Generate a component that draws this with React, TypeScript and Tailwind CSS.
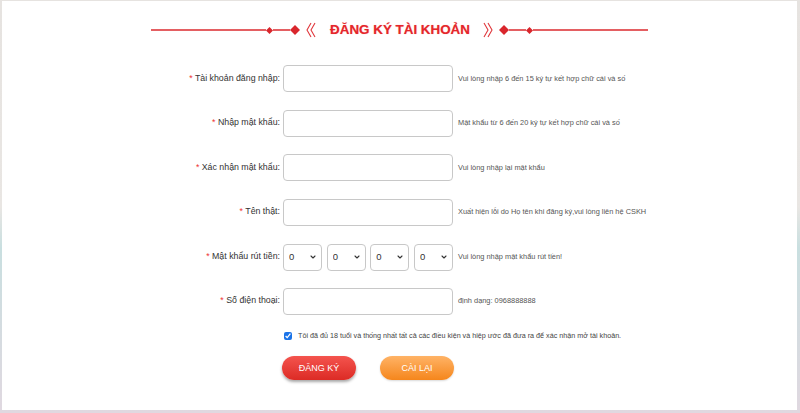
import { ChevronDown } from 'lucide-react';

const fields = [
  { label: 'Tài khoản đăng nhập:', hint: 'Vui lòng nhập 6 đến 15 ký tự kết hợp chữ cái và số' },
  { label: 'Nhập mật khẩu:', hint: 'Mật khẩu từ 6 đến 20 ký tự kết hợp chữ cái và số' },
  { label: 'Xác nhận mật khẩu:', hint: 'Vui lòng nhập lại mật khẩu' },
  { label: 'Tên thật:', hint: 'Xuất hiện lỗi do Họ tên khi đăng ký,vui lòng liên hệ CSKH' },
  { label: 'Mật khẩu rút tiền:', hint: 'Vui lòng nhập mật khẩu rút tiền!', pin: true },
  { label: 'Số điện thoại:', hint: 'định dạng: 0968888888' },
];

function Diamond({ size }: { size: number }) {
  return (
    <svg width={size} height={size} viewBox="0 0 10 10" className="shrink-0">
      <path d="M5 0 L10 5 L5 10 L0 5 Z" fill="#d9262c" />
    </svg>
  );
}

function Chevrons({ flip }: { flip?: boolean }) {
  return (
    <svg width="10" height="16" viewBox="0 0 10 16" className={flip ? 'shrink-0 -scale-x-100' : 'shrink-0'}>
      <path d="M5 1 L1 8 L5 15" fill="none" stroke="#e0383d" strokeWidth="1.1" />
      <path d="M9 1 L5 8 L9 15" fill="none" stroke="#e0383d" strokeWidth="1.1" />
    </svg>
  );
}

function Title() {
  return (
    <div className="flex h-[20px] items-center">
      <div className="h-[1.5px] w-[115px] bg-[#e45f62]" />
      <Diamond size={7} />
      <div className="h-[1.5px] w-[17px] bg-[#e45f62]" />
      <Diamond size={10} />
      <div className="ml-[6px]">
        <Chevrons />
      </div>
      <span className="ml-[14px] mr-[13px] font-['Liberation_Sans',sans-serif] text-[13.4px] font-bold text-[#e5262b] [text-shadow:0_0_1px_#f29a9a]">
        ĐĂNG KÝ TÀI KHOẢN
      </span>
      <Chevrons flip />
      <div className="ml-[6px]">
        <Diamond size={10} />
      </div>
      <div className="h-[1.5px] w-[17px] bg-[#e45f62]" />
      <Diamond size={7} />
      <div className="h-[1.5px] w-[115px] bg-[#e45f62]" />
    </div>
  );
}

function PinSelect() {
  return (
    <div className="relative h-[27px] w-[39px]">
      <select
        defaultValue="0"
        className="h-full w-full appearance-none rounded-[4px] border border-[#c8c8c8] bg-white pl-[5px] text-[9.5px] text-[#333] outline-none"
      >
        {[0, 1, 2, 3, 4, 5, 6, 7, 8, 9].map((n) => (
          <option key={n} value={String(n)}>
            {n}
          </option>
        ))}
      </select>
      <ChevronDown size={8} strokeWidth={3.2} className="pointer-events-none absolute right-[5px] top-[10px] text-[#333]" />
    </div>
  );
}

export default function App() {
  return (
    <div className="h-[413px] w-[800px] bg-[linear-gradient(180deg,#e6e3e0_0%,#e9e6e3_50%,#c9dfe0_60%,#e0d8e0_100%)] pb-[3px] pl-[2px] pr-[3px] pt-[1px] font-['Liberation_Sans',sans-serif]">
      <div className="flex h-full flex-col items-center bg-white">
        <div className="mt-[19px]">
          <Title />
        </div>

        <div className="mt-[25px] flex w-full flex-col gap-[17.5px]">
          {fields.map((f) => (
            <div key={f.label} className="flex h-[27px] items-center">
              <label className="w-[281px] pr-[3px] text-right text-[8.8px] text-[#333]">
                <span className="text-[#e33]">* </span>
                {f.label}
              </label>
              {f.pin ? (
                <div className="flex w-[170px] justify-between">
                  <PinSelect />
                  <PinSelect />
                  <PinSelect />
                  <PinSelect />
                </div>
              ) : (
                <input className="h-[27px] w-[170px] rounded-[4px] border border-[#c8c8c8] bg-white px-2 text-[10px] outline-none" />
              )}
              <span className="ml-[5px] text-[7.4px] text-[#555]">{f.hint}</span>
            </div>
          ))}
        </div>

        <div className="mt-[16px] flex w-full items-center pl-[282px]">
          <input type="checkbox" defaultChecked className="m-0 h-[8px] w-[8px] accent-[#1a73e8]" />
          <span className="ml-[6px] text-[7.2px] text-[#444]">
            Tôi đã đủ 18 tuổi và thống nhất tất cả các điều kiện và hiệp ước đã đưa ra để xác nhận mở tài khoản.
          </span>
        </div>

        <div className="mt-[15px] flex w-full gap-[24px] pl-[280px]">
          <button className="h-[24px] w-[74px] rounded-full bg-[linear-gradient(180deg,#f4544e_0%,#dc2b25_100%)] text-[9px] text-white shadow-[0_2px_3px_rgba(0,0,0,0.35)]">
            ĐĂNG KÝ
          </button>
          <button className="h-[24px] w-[74px] rounded-full bg-[linear-gradient(180deg,#ffb366_0%,#f5861c_100%)] text-[9px] text-white shadow-[0_1px_2px_rgba(0,0,0,0.15)]">
            CÀI LẠI
          </button>
        </div>
      </div>
    </div>
  );
}
